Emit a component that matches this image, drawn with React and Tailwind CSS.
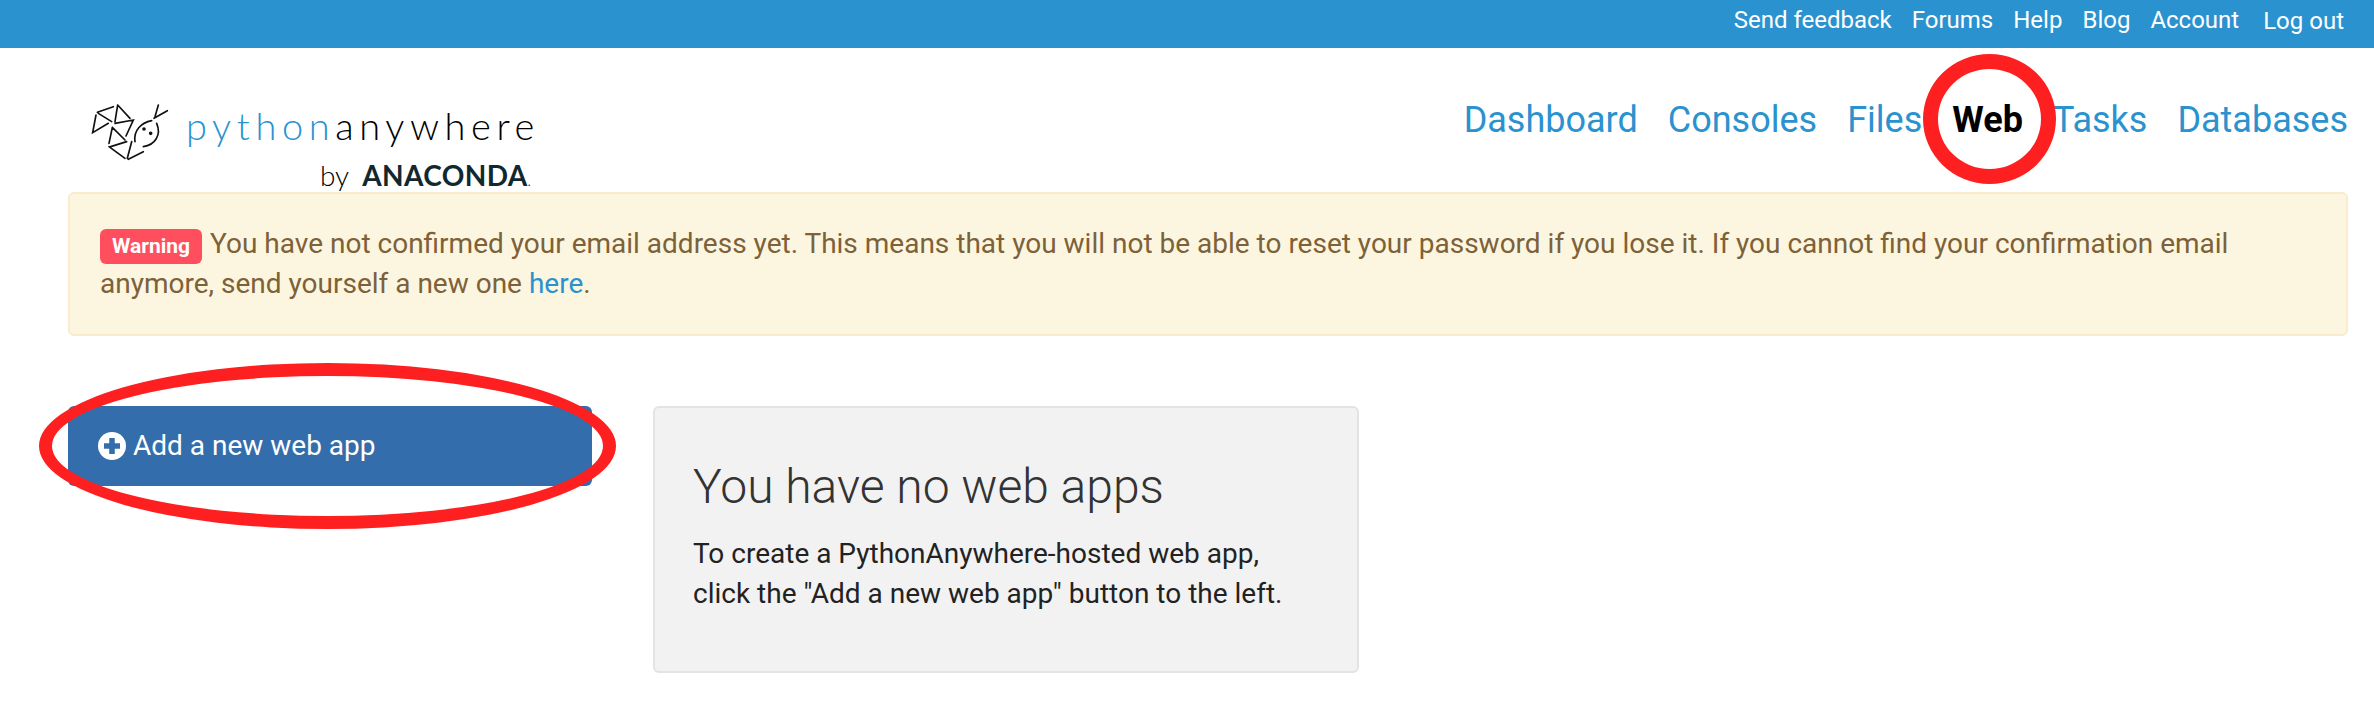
const topLinks = ["Send feedback", "Forums", "Help", "Blog", "Account"];
const navLinks = ["Dashboard", "Consoles", "Files", "Web", "Tasks", "Databases"];

const LogoMark = () => (
  <svg width="100" height="80" viewBox="0 0 300 240" fill="none" stroke="#111" strokeWidth="5" strokeLinecap="round">
    <path d="M52 67L100 50M55 70L95 95M48 75L38 128L85 100M113 45L105 95M113 45L150 85M105 100L160 90L138 138M97 112L135 150M97 112L87 160M87 170L135 205M92 170L140 155M155 155L142 205M145 208L190 185" />
    <path d="M215 92C185 98 160 120 165 155M230 100C245 135 225 165 190 170M235 45L225 80M262 62L222 85" />
    <circle cx="192" cy="117" r="3" fill="#111" />
    <circle cx="212" cy="130" r="3" fill="#111" />
  </svg>
);

const App = () => {
  return (
    <div className="relative h-[708px] overflow-hidden bg-white font-['Roboto',sans-serif] text-[28px] leading-[40px] text-[#222]">
      <div className="flex h-12 items-center justify-end gap-5 bg-[#2a92cf] pb-[8px] pr-[30px] text-[24px] text-white">
        {topLinks.map((link) => (
          <a key={link}>{link}</a>
        ))}
        <a className="ml-1 mt-[2px]">Log out</a>
      </div>

      <div className="flex h-[144px] px-[68px] pr-[26px]">
        <div className="relative w-[480px]">
          <div className="absolute left-[12px] top-[42px]">
            <LogoMark />
          </div>
          <div className="absolute left-[118px] top-[56px] font-['Lato',sans-serif] text-[38px] font-light leading-[42px] tracking-[5.6px] whitespace-nowrap">
            <span className="text-[#2a92cf]">python</span>
            <span className="text-black">anywhere</span>
          </div>
          <div className="absolute left-[252px] top-[107px] flex items-baseline gap-[13px] font-['Lato',sans-serif] whitespace-nowrap">
            <span className="text-[28px] font-light text-black">by</span>
            <span className="text-[28px] font-bold tracking-[0.4px] text-[#12282f]">ANACONDA<span className="text-[12px] font-normal">.</span></span>
          </div>
        </div>
        <nav className="ml-auto flex h-[144px] items-center gap-[30px] text-[36px]">
          {navLinks.map((link) =>
            link === "Web" ? (
              <a key={link} className="font-bold text-black">{link}</a>
            ) : (
              <a key={link} className="text-[#2a92cf]">{link}</a>
            )
          )}
        </nav>
      </div>

      <div className="mx-[68px] mr-[26px] h-[144px] rounded-md border-2 border-[#faebcc] bg-[#fcf6e0] px-[30px] pt-[30px] text-[#7d6138]">
        <span className="mr-[8px] inline-block rounded-md bg-[#ff4f5f] px-[12px] text-[21px] font-bold leading-[35px] text-white">Warning</span>
        You have not confirmed your email address yet. This means that you will not be able to reset your password if you lose it. If you cannot find your confirmation email anymore, send yourself a new one <a className="text-[#2a92cf]">here</a>.
      </div>

      <div className="ml-[68px] mt-[70px] flex items-start gap-[61px]">
        <button className="flex h-[80px] w-[524px] items-center gap-[7px] rounded-md bg-[#346dab] pl-[30px] text-white">
          <svg width="28" height="28" viewBox="0 0 28 28">
            <circle cx="14" cy="14" r="14" fill="white" />
            <path d="M14 6V22M6 14H22" stroke="#346dab" strokeWidth="5.5" />
          </svg>
          Add a new web app
        </button>
        <div className="h-[267px] w-[706px] rounded-md border-2 border-[#e3e3e3] bg-[#f2f2f2] px-[38px] pt-[44px]">
          <h2 className="text-[48px] font-light leading-[70px] text-[#333]">You have no web apps</h2>
          <p className="mt-[12px]">To create a PythonAnywhere-hosted web app,<br />click the "Add a new web app" button to the left.</p>
        </div>
      </div>

      {/* red hand-drawn marks on top of the page */}
      <div className="absolute left-[1923px] top-[54px] h-[130px] w-[133px] rounded-[50%] border-[15px] border-[#fe2020]" />
      <div className="absolute left-[39px] top-[363px] h-[166px] w-[577px] rounded-[50%] border-[13px] border-[#fe2020]" />
    </div>
  );
};

export default App;
